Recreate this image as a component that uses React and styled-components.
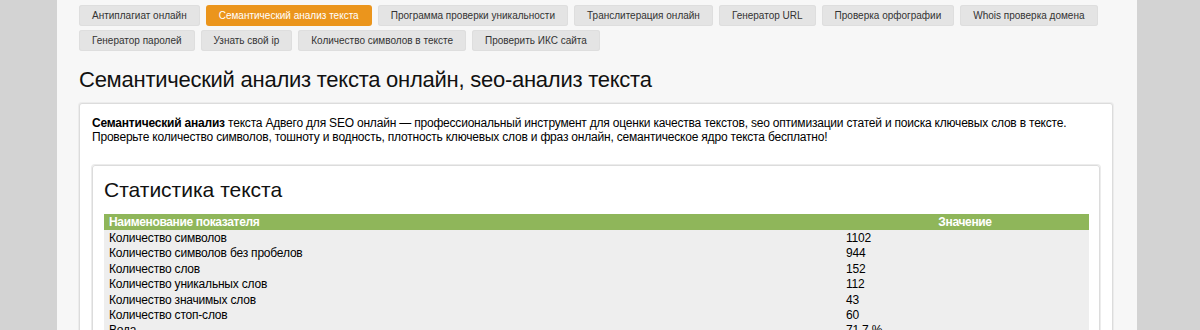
import React from "react";
import styled, { createGlobalStyle } from "styled-components";

const GlobalStyle = createGlobalStyle`
  html, body {
    margin: 0;
    padding: 0;
    background: #d3d3d3;
    overflow: hidden;
  }
  body {
    font-family: "Liberation Sans", Arial, sans-serif;
    color: #000;
  }
`;

const tools = [
  ["Антиплагиат онлайн", "Семантический анализ текста", "Программа проверки уникальности", "Транслитерация онлайн", "Генератор URL", "Проверка орфографии", "Whois проверка домена"],
  ["Генератор паролей", "Узнать свой ip", "Количество символов в тексте", "Проверить ИКС сайта"],
];

const stats = [
  ["Количество символов", "1102"],
  ["Количество символов без пробелов", "944"],
  ["Количество слов", "152"],
  ["Количество уникальных слов", "112"],
  ["Количество значимых слов", "43"],
  ["Количество стоп-слов", "60"],
  ["Вода", "71.7 %"],
  ["Количество грамматических ошибок", "0"],
];

const App = () => {
  return (
    <>
      <GlobalStyle />
      <Page>
        <Main>
          <Nav>
            {tools.map((row, i) => (
              <NavRow key={i}>
                {row.map((name) => (
                  <Tab key={name} $active={name === "Семантический анализ текста"}>
                    {name}
                  </Tab>
                ))}
              </NavRow>
            ))}
          </Nav>
          <Title>Семантический анализ текста онлайн, seo-анализ текста</Title>
          <Card>
            <Intro>
              <b>Семантический анализ</b> текста Адвего для SEO онлайн — профессиональный инструмент для оценки качества текстов, seo оптимизации статей и поиска ключевых слов в тексте.
              <br />
              Проверьте количество символов, тошноту и водность, плотность ключевых слов и фраз онлайн, семантическое ядро текста бесплатно!
            </Intro>
            <Panel>
              <PanelTitle>Статистика текста</PanelTitle>
              <Table>
                <thead>
                  <tr>
                    <Th>Наименование показателя</Th>
                    <Th $center>Значение</Th>
                  </tr>
                </thead>
                <tbody>
                  {stats.map(([label, value]) => (
                    <tr key={label}>
                      <Td>{label}</Td>
                      <Td>{value}</Td>
                    </tr>
                  ))}
                </tbody>
              </Table>
            </Panel>
          </Card>
        </Main>
      </Page>
    </>
  );
};

const Page = styled.div`
  padding-left: 57px;
  height: 330px;
`;

const Main = styled.div`
  width: 1080px;
  min-height: 330px;
  background: #f7f7f7;
  padding: 5px 24px 0 22px;
  box-sizing: border-box;
`;

const Nav = styled.div`
  display: flex;
  flex-direction: column;
  gap: 4px;
`;

const NavRow = styled.div`
  display: flex;
  gap: 6px;
`;

const Tab = styled.div`
  height: 21px;
  line-height: 21px;
  padding: 0 13px;
  border-radius: 3px;
  font-size: 10px;
  white-space: nowrap;
  background: ${(p) => (p.$active ? "#eb951c" : "#e4e4e4")};
  color: ${(p) => (p.$active ? "#fff" : "#333")};
  box-shadow: ${(p) => (p.$active ? "none" : "inset 0 0 0 1px #dedede")};
`;

const Title = styled.h1`
  margin: 14px 0 0;
  font-size: 22px;
  letter-spacing: -0.25px;
  font-weight: normal;
  line-height: 30px;
  color: #111;
`;

const Card = styled.div`
  margin-top: 8px;
  background: #fff;
  border: 1px solid #dcdcdc;
  border-radius: 3px;
  box-shadow: 0 0 0 1px #ececec;
  padding: 12px;
`;

const Intro = styled.p`
  margin: 0;
  font-size: 12px;
  letter-spacing: -0.2px;
  line-height: 14px;
  color: #000;
`;

const Panel = styled.div`
  margin-top: 21px;
  border: 1px solid #dcdcdc;
  border-radius: 3px;
  box-shadow: 0 0 0 1px #ececec;
  padding: 10px 10px 10px 11px;
`;

const PanelTitle = styled.h2`
  margin: 0 0 10px;
  font-size: 21px;
  font-weight: normal;
  line-height: 28px;
  color: #111;
`;

const Table = styled.table`
  width: 100%;
  border-collapse: collapse;
  font-size: 12px;
  letter-spacing: -0.2px;
`;

const Th = styled.th`
  background: #8fb65a;
  color: #fff;
  font-weight: bold;
  letter-spacing: -0.35px;
  height: 16px;
  padding: 0 5px;
  line-height: 16px;
  text-align: ${(p) => (p.$center ? "center" : "left")};
  &:first-child {
    width: 727px;
  }
`;

const Td = styled.td`
  background: #eeeeee;
  padding: 1px 5px 0;
  height: 14.4px;
  line-height: 14.4px;
`;

export default App;
